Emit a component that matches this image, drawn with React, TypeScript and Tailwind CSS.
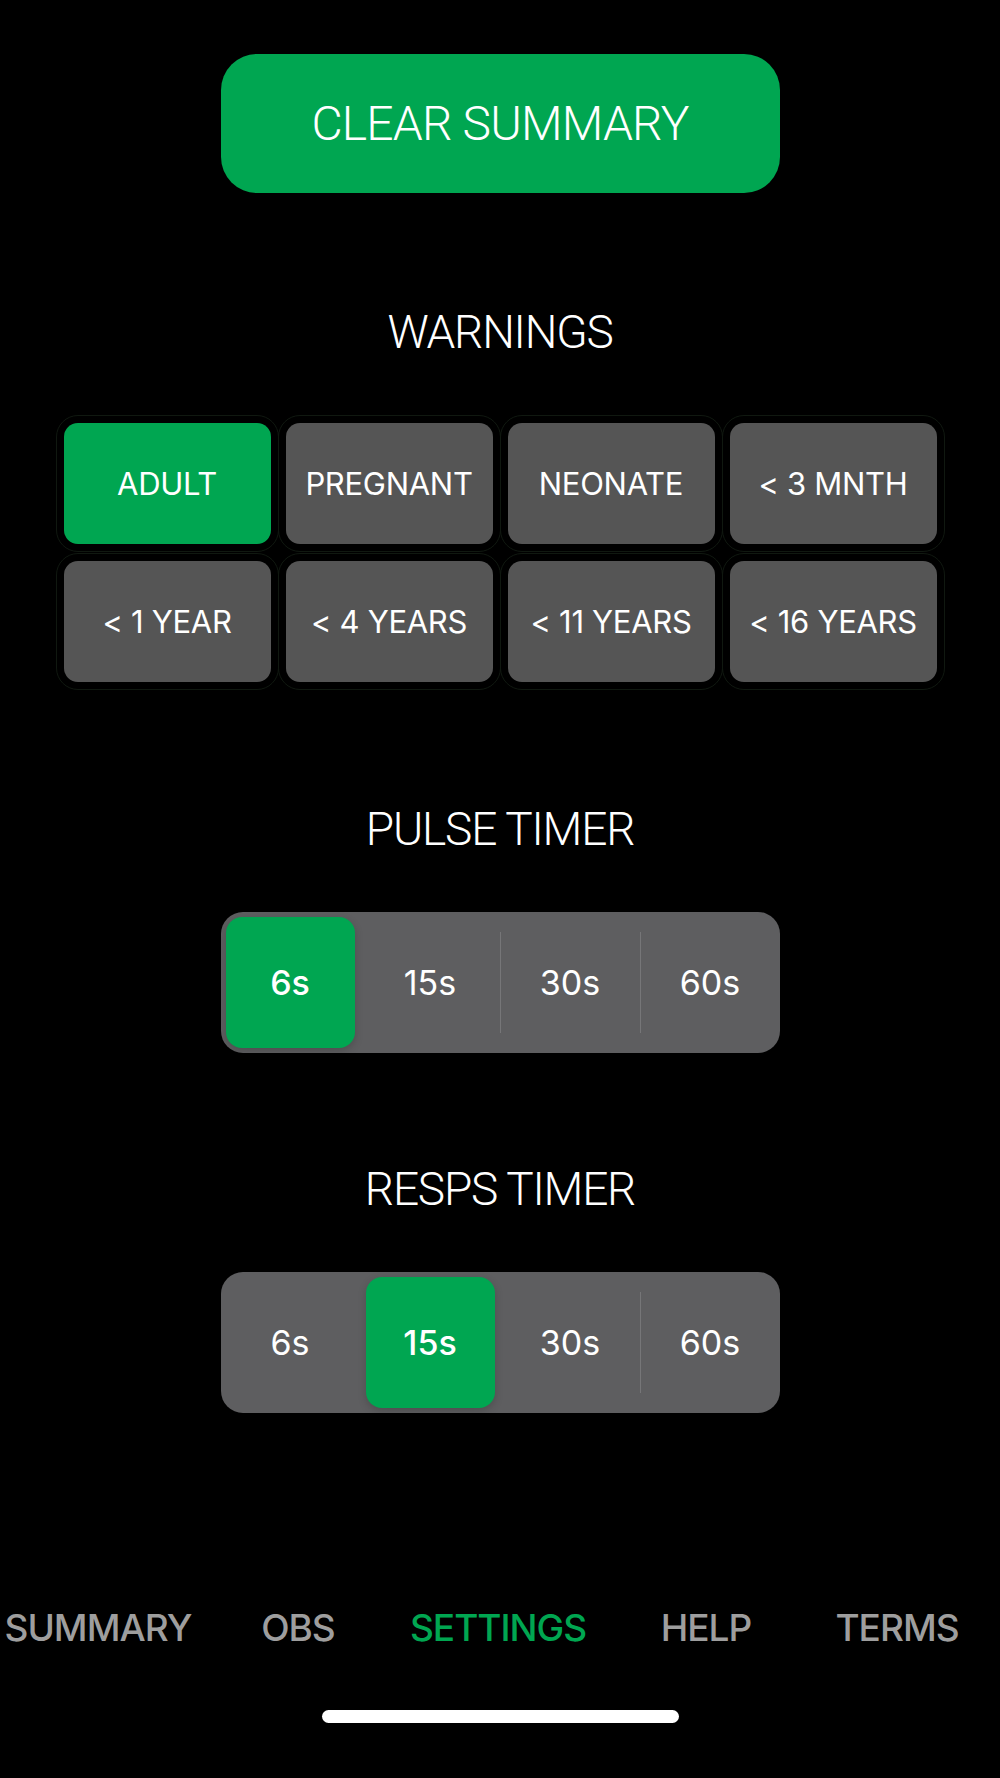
import React from "react";

const GREEN = "bg-[#00a651]";

function Heading({ children, mt }: { children: React.ReactNode; mt: string }) {
  return (
    <div className={`${mt} h-[46px] flex items-center justify-center text-[46px] leading-none font-light tracking-[-1.2px] text-white font-['Roboto',sans-serif]`}>
      {children}
    </div>
  );
}

function Segmented({ selected }: { selected: number }) {
  const items = ["6s", "15s", "30s", "60s"];
  const nodes: React.ReactNode[] = [];
  items.forEach((label, i) => {
    const sel = i === selected;
    nodes.push(
      <div key={label} className="flex-1 h-full p-[5px] flex">
        <div
          className={`flex-1 flex items-center justify-center rounded-[16px] text-[34px] leading-none text-white ${
            sel ? `${GREEN} font-medium shadow-[0_3px_8px_rgba(0,0,0,0.18)]` : "font-normal"
          }`}
        >
          {label}
        </div>
      </div>
    );
    if (i < items.length - 1) {
      const show = i !== selected && i + 1 !== selected;
      nodes.push(
        <div
          key={`sep-${i}`}
          className={`w-px h-[101px] self-center ${show ? "bg-[#767678]" : "bg-transparent"}`}
        />
      );
    }
  });
  return (
    <div className="w-[559px] h-[141px] rounded-[22px] bg-[#5e5e60] flex items-stretch">{nodes}</div>
  );
}

export default function App() {
  const warnings = [
    "ADULT",
    "PREGNANT",
    "NEONATE",
    "< 3 MNTH",
    "< 1 YEAR",
    "< 4 YEARS",
    "< 11 YEARS",
    "< 16 YEARS",
  ];
  const tabs = ["SUMMARY", "OBS", "SETTINGS", "HELP", "TERMS"];
  return (
    <div className="w-[1000px] h-[1778px] bg-black flex flex-col items-center font-['Inter',sans-serif] overflow-hidden">
      <button className={`mt-[54px] w-[559px] h-[139px] rounded-[36px] ${GREEN} text-white text-[48px] leading-none font-light tracking-[-0.8px] font-['Roboto',sans-serif] flex items-center justify-center`}>
        CLEAR SUMMARY
      </button>

      <Heading mt="mt-[116px]">WARNINGS</Heading>

      <div className="mt-[68px] grid grid-cols-[repeat(4,207px)] auto-rows-[121px] gap-x-[15px] gap-y-[17px]">
        {warnings.map((w, i) => (
          <div
            key={w}
            className={`rounded-[14px] flex items-center justify-center text-white text-[31px] leading-none font-normal tracking-[-0.3px] outline outline-1 outline-offset-[7px] outline-[#101810] ${
              i === 0 ? GREEN : "bg-[#555555]"
            }`}
          >
            {w}
          </div>
        ))}
      </div>

      <Heading mt="mt-[124px]">PULSE TIMER</Heading>
      <div className="mt-[60px]">
        <Segmented selected={0} />
      </div>

      <Heading mt="mt-[113px]">RESPS TIMER</Heading>
      <div className="mt-[60px]">
        <Segmented selected={1} />
      </div>

      <div className="mt-[195px] w-[1000px] h-[38px] grid grid-cols-[196px_204px_196px_220px_162px]">
        {tabs.map((t) => (
          <div
            key={t}
            className={`flex items-center justify-center text-[37px] leading-none font-medium tracking-[-1px] ${
              t === "SETTINGS" ? "text-[#00a651]" : "text-[#9e9e9e]"
            }`}
          >
            {t}
          </div>
        ))}
      </div>

      <div className="mt-[64px] w-[357px] h-[13px] rounded-full bg-white" />
    </div>
  );
}
